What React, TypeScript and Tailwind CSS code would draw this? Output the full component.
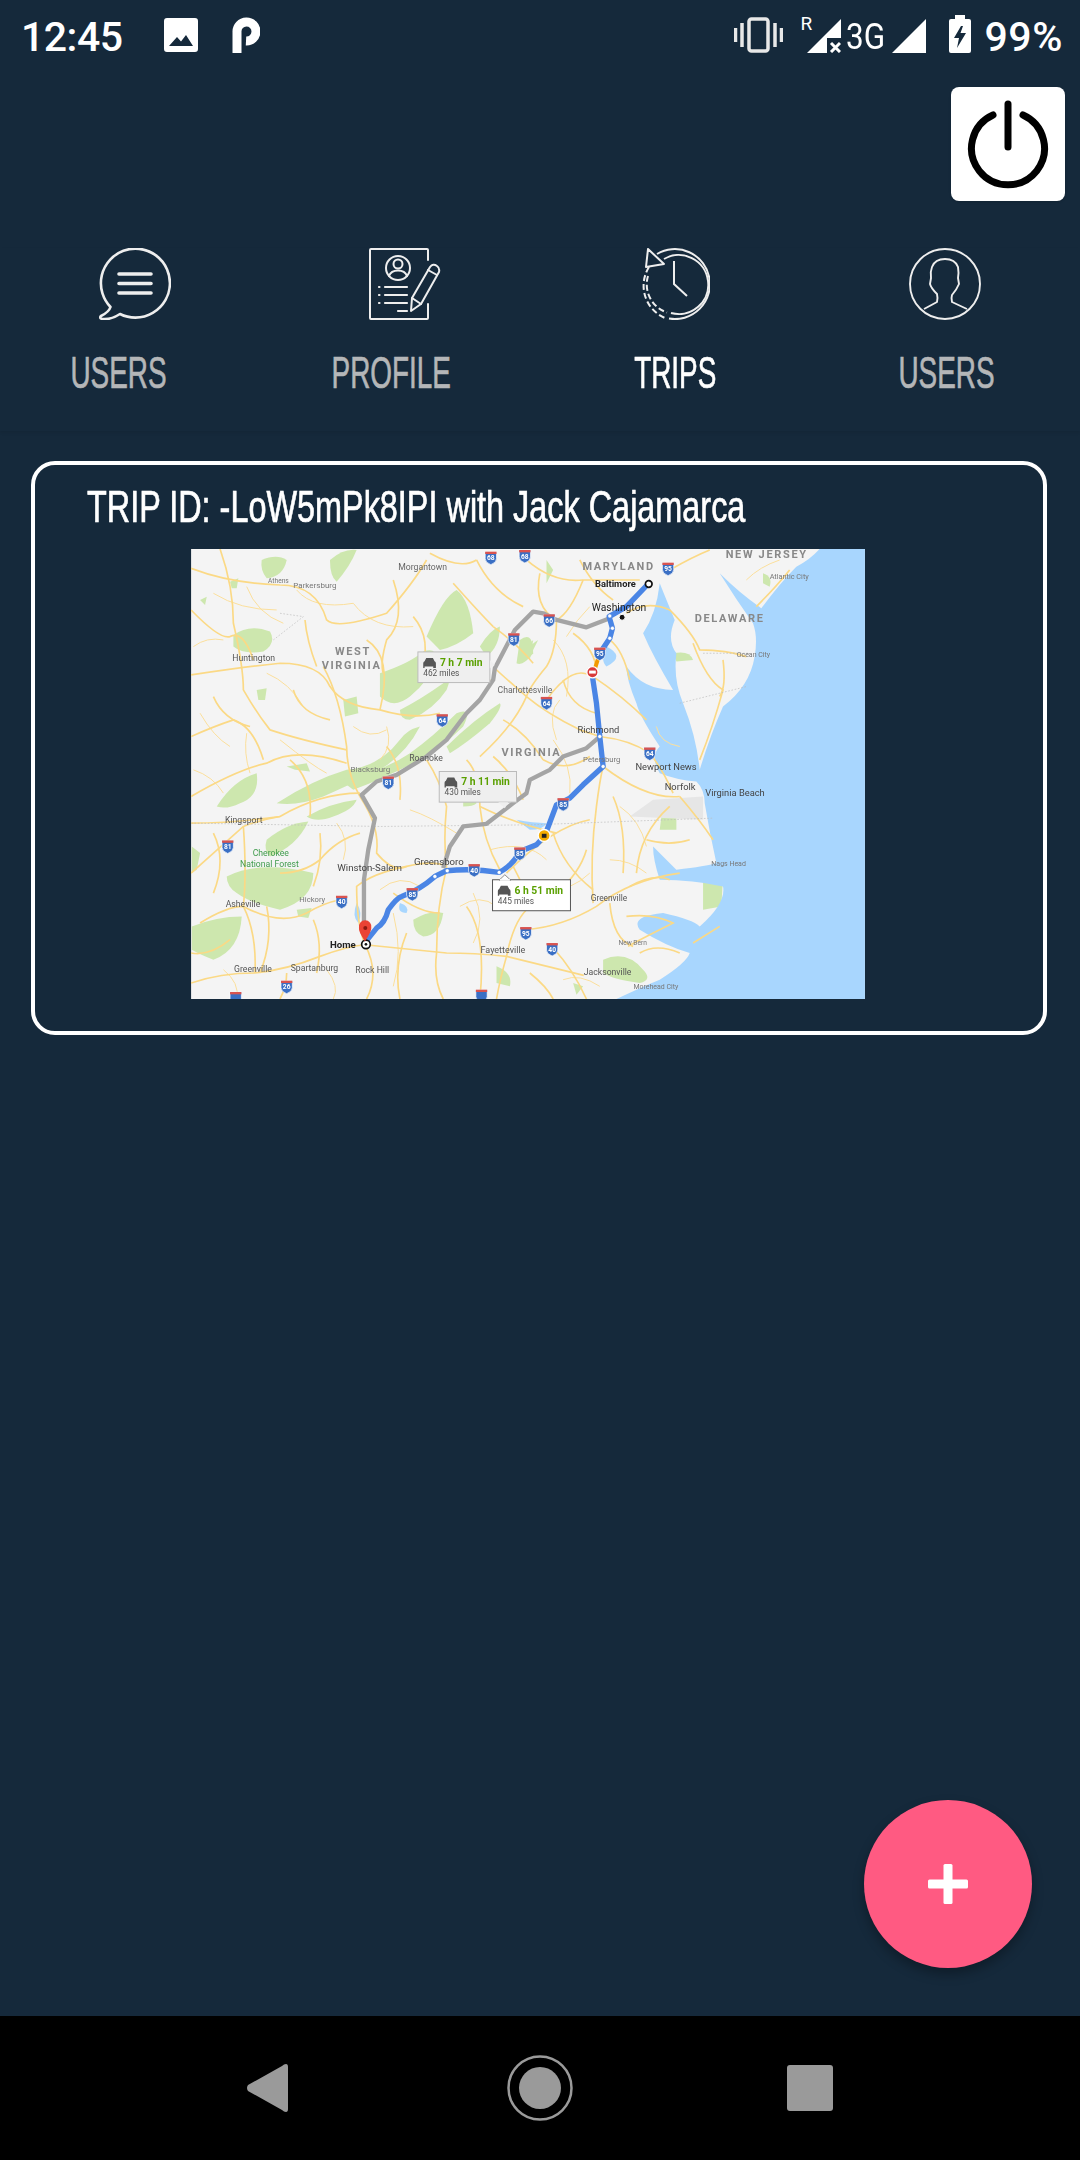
import React from "react";

const FONT_NAME = "font-['Liberation_Sans',sans-serif] [-webkit-text-stroke:0.7px_currentColor]";

const greens = [
  "M160 285Q210 250 270 275Q290 310 250 335Q190 345 160 320Z",
  "M450 60Q490 25 530 30Q510 80 470 125Q450 110 450 60Z",
  "M245 60Q290 40 320 60Q310 110 260 115Q240 90 245 60Z",
  "M150 125L175 115L170 145L155 145Z",
  "M60 180L80 170L75 195Z",
  "M230 450L260 445L255 480L235 480Z",
  "M600 400Q690 370 730 335Q770 320 770 360Q750 420 690 470Q640 510 600 470Z",
  "M660 510Q720 480 790 430Q820 400 800 450Q760 510 690 540Q660 540 660 510Z",
  "M740 290Q790 170 830 150Q870 180 880 280Q830 320 780 330Z",
  "M900 320Q930 270 960 260Q960 320 920 350Z",
  "M290 790Q400 720 500 690Q600 680 660 600Q680 570 720 560Q680 640 600 690Q500 740 430 770Q350 800 290 790Z",
  "M480 720Q600 700 690 640Q760 590 830 520Q880 500 850 560Q780 630 700 670Q600 720 520 750Z",
  "M800 620Q880 540 960 490Q970 500 930 550Q860 610 810 640Z",
  "M380 830Q450 790 530 780Q520 810 460 830Q410 850 380 830Z",
  "M110 800Q160 720 230 700Q240 770 180 790Q140 810 110 800Z",
  "M320 680L380 670L390 695L345 690Z",
  "M260 900Q320 850 385 845Q350 920 270 950Q250 930 260 900Z",
  "M140 1010Q240 960 400 1000Q400 1080 300 1110Q210 1090 170 1060Q140 1040 140 1010Z",
  "M35 1160Q110 1130 185 1130Q180 1230 100 1260Q50 1240 35 1230Z",
  "M35 920L60 940L50 990L35 1000Z",
  "M850 770Q880 760 890 790Q880 800 850 800Z",
  "M700 1140Q750 1110 790 1120Q780 1190 730 1190Q700 1180 700 1140Z",
  "M350 1110L395 1105L385 1135L355 1130Z",
  "M1020 300Q1060 270 1060 340Q1030 380 1010 370Z",
  "M1035 330Q1060 310 1075 300L1050 350Z",
  "M490 480L530 470L535 520L495 530Z",
  "M1450 790L1490 790L1490 870L1440 870Z",
  "M1570 1010L1630 1010L1625 1100L1570 1110Z",
  "M1270 1260Q1340 1230 1390 1290Q1420 1320 1380 1330Q1300 1320 1270 1300Z",
  "M1480 340Q1530 330 1540 360L1490 365Z",
  "M1750 100Q1780 110 1770 140L1750 130Z",
  "M950 1280Q1000 1300 990 1340L950 1330Z",
  "M1100 60L1120 90L1100 130Z",
  "M1040 320L1060 300L1050 360Z",
  "M1180 1330L1210 1340L1190 1365Z",
];

const roads = [
  "M33 85Q150 130 300 135Q410 135 440 240Q470 270 620 220Q700 130 740 60",
  "M33 405Q200 380 300 370Q420 370 450 440Q490 500 600 510Q700 540 780 520",
  "M375 240Q380 300 410 380",
  "M120 27Q160 140 160 250Q190 380 190 450Q230 520 270 570Q360 600 500 630",
  "M430 380Q480 470 500 620Q500 700 540 770",
  "M33 770Q170 690 260 670Q350 620 500 670",
  "M33 850Q160 850 300 830Q420 760 540 760",
  "M540 770Q600 860 590 940Q640 1000 680 980Q760 960 800 980",
  "M33 1000Q100 940 190 860Q240 840 300 830",
  "M190 860Q200 1000 190 1100Q230 1180 225 1300",
  "M60 1150Q140 1100 190 1100Q300 1160 380 1120Q430 1090 480 1080",
  "M225 1300Q320 1290 420 1250Q500 1220 555 1215",
  "M555 1215Q530 1150 530 1040Q580 1000 680 980",
  "M555 1215Q600 1300 560 1378",
  "M320 1300Q320 1340 300 1378",
  "M555 1215Q700 1230 800 1240Q880 1240 980 1250",
  "M800 985Q770 1100 770 1240Q760 1320 790 1378",
  "M980 1250Q960 1320 950 1378",
  "M980 1250Q1000 1150 1040 1110Q1040 1050 1000 980",
  "M980 1250Q1100 1280 1212 1307",
  "M1040 1170Q1150 1160 1250 1100Q1350 1020 1500 1000",
  "M1290 1090Q1300 1200 1360 1220",
  "M1240 1090Q1230 950 1250 800Q1260 720 1270 680",
  "M1120 1225Q1180 1290 1220 1378",
  "M1270 680Q1400 780 1500 770",
  "M1260 590Q1350 600 1410 640Q1450 690 1480 760",
  "M1500 770Q1560 840 1600 900",
  "M1470 800Q1380 880 1370 1000",
  "M1230 840Q1120 860 980 1000",
  "M900 800Q1000 850 1130 880",
  "M740 660Q780 720 800 800Q790 900 800 985",
  "M860 660Q900 700 900 800Q910 900 960 990",
  "M1040 470Q1100 520 1200 570Q1230 580 1260 590",
  "M1040 470Q1000 560 900 650",
  "M1040 470Q960 400 945 385",
  "M1100 480Q1180 370 1235 410",
  "M1130 240Q1130 330 1100 380Q1050 440 1040 470",
  "M1240 410Q1330 470 1400 540",
  "M1290 300Q1330 330 1350 420",
  "M1340 220Q1400 180 1470 210Q1540 280 1560 330Q1640 330 1700 350",
  "M1470 90Q1540 50 1590 30",
  "M1540 310Q1580 420 1630 450Q1600 560 1560 660",
  "M1630 360Q1640 440 1620 470",
  "M1730 200Q1790 140 1830 90",
  "M1200 60Q1240 140 1300 180",
  "M1040 60Q1120 130 1210 120Q1300 120 1380 120",
  "M640 120Q680 240 620 300Q600 370 610 400",
  "M890 60Q940 160 1030 200",
  "M750 40Q840 90 890 60",
  "M1340 1130Q1420 1120 1480 1150Q1380 1200 1345 1220",
  "M1350 1040Q1420 1000 1470 1020",
  "M300 1000Q370 1000 420 960Q470 900 540 880",
  "M33 210Q120 300 150 290Q190 270 220 360",
  "M33 590Q100 560 160 540Q220 560 250 660",
  "M100 470Q130 540 210 560",
  "M340 450Q360 520 450 540",
  "M560 300Q640 350 600 510",
  "M700 230Q760 300 720 400",
  "M820 130Q900 220 940 260",
  "M940 260Q1010 310 1060 370",
  "M1080 100Q1060 200 1130 240",
  "M1210 120Q1170 220 1130 240",
  "M1180 280Q1250 330 1250 400",
  "M1150 420Q1170 500 1250 520",
  "M970 540Q1040 580 1090 660",
  "M1090 660Q1160 700 1230 650",
  "M940 650Q1000 700 1030 780",
  "M620 620Q670 680 660 780",
  "M330 660Q400 720 390 830",
  "M420 880Q430 960 400 1040",
  "M100 880Q140 960 100 1060",
  "M260 1100Q280 1200 240 1300",
  "M400 1140Q430 1210 410 1300",
  "M640 1060Q720 1120 780 1120",
  "M680 1180Q640 1280 660 1378",
  "M860 1100Q920 1180 900 1378",
  "M1050 1300Q1100 1340 1120 1378",
  "M1130 1060Q1200 1000 1220 930",
  "M1300 770Q1340 860 1330 1000",
  "M1400 900Q1470 920 1530 900",
  "M1380 1240Q1430 1210 1500 1240",
  "M1120 880Q1150 980 1240 1050",
  "M33 1330Q120 1300 225 1300",
  "M33 1240Q90 1250 150 1200",
  "M1620 1160L1540 1210",
];

const thinRoads = [
  "M100 160Q180 210 290 210",
  "M300 600Q400 680 440 700",
  "M60 520Q100 590 150 620",
  "M620 560Q640 620 600 660",
  "M820 380Q860 430 940 420",
  "M1120 600Q1180 680 1170 760",
  "M930 930Q1040 900 1100 960",
  "M640 1120Q670 1240 640 1340",
  "M880 1060Q920 1140 880 1210",
  "M1090 1060Q1180 1050 1230 1000",
  "M1320 800Q1380 840 1400 920",
  "M1120 300Q1180 360 1160 470",
  "M200 140Q230 220 310 250",
  "M350 150Q400 210 520 190",
  "M520 190Q580 270 700 260",
  "M40 320Q80 290 130 300",
  "M260 400Q330 430 370 500",
  "M520 560Q570 600 620 570",
  "M40 690Q100 710 130 760",
  "M200 580Q190 640 210 700",
  "M470 850Q510 900 490 960",
  "M690 810Q750 830 830 880",
  "M600 1050Q660 1000 720 1040",
  "M840 1100Q900 1060 950 1100",
  "M440 1290Q480 1340 460 1378",
  "M130 1290Q180 1330 170 1378",
  "M1130 600Q1100 520 1140 480",
  "M1230 200Q1190 240 1160 290",
  "M1430 560Q1440 610 1500 620",
  "M1400 1000Q1350 960 1290 960",
  "M1150 1320Q1200 1300 1260 1340",
  "M1700 120Q1740 80 1800 60",
];

const water = "M1036 27L1036 1378L290 1378Q370 1340 420 1320Q500 1270 510 1240Q440 1220 360 1170Q330 1130 430 1120Q520 1140 540 1160Q620 1090 610 1040Q520 1020 420 1020Q400 960 400 920Q440 960 470 990Q560 980 590 970Q570 880 555 790Q555 750 530 725Q470 720 420 700Q390 650 420 620Q360 530 350 490Q320 420 320 380Q370 450 460 450Q400 350 370 280Q410 220 420 130Q440 180 465 240Q440 300 470 340Q460 420 490 490Q530 590 540 690Q570 590 610 500Q690 440 705 350Q715 290 700 250Q650 180 600 100Q660 160 725 205Q780 130 830 80Q870 60 900 27Z";

const lakes = [
  "M1010 840Q1060 850 1100 850Q1090 870 1050 870Z",
  "M530 1090Q550 1120 535 1150Q515 1130 530 1090Z",
  "M660 1090Q690 1100 680 1120Q650 1120 660 1090Z",
  "M1280 320Q1340 350 1280 380Q1260 360 1280 320Z",
];

const labels: [number, number, string, number, string, number?, boolean?][] = [
  [264, 128, "Athens", 20, "#777"],
  [340, 145, "Parkersburg", 24, "#777"],
  [655, 90, "Morgantown", 26, "#666"],
  [157, 362, "Huntington", 26, "#555"],
  [465, 345, "WEST", 33, "#888", 5, true],
  [425, 388, "VIRGINIA", 33, "#888", 5, true],
  [953, 460, "Charlottesville", 26, "#666"],
  [965, 647, "VIRGINIA", 33, "#888", 5, true],
  [688, 663, "Roanoke", 26, "#555"],
  [512, 697, "Blacksburg", 24, "#777"],
  [135, 850, "Kingsport", 26, "#555"],
  [218, 950, "Cherokee", 26, "#3f9b4c"],
  [180, 983, "National Forest", 26, "#3f9b4c"],
  [472, 994, "Winston-Salem", 29, "#444"],
  [702, 976, "Greensboro", 29, "#444"],
  [137, 1102, "Asheville", 26, "#555"],
  [358, 1088, "Hickory", 23, "#777"],
  [450, 1224, "Home", 29, "#222", 0, true],
  [162, 1296, "Greenville", 26, "#555"],
  [332, 1293, "Spartanburg", 26, "#555"],
  [526, 1300, "Rock Hill", 26, "#555"],
  [902, 1240, "Fayetteville", 27, "#555"],
  [1208, 90, "MARYLAND", 33, "#888", 5, true],
  [1638, 55, "NEW JERSEY", 33, "#888", 5, true],
  [1770, 117, "Atlantic City", 22, "#777"],
  [1246, 140, "Baltimore", 28, "#222", 0, true],
  [1236, 213, "Washington", 31, "#222"],
  [1545, 245, "DELAWARE", 33, "#888", 5, true],
  [1671, 352, "Ocean City", 21, "#777"],
  [1193, 580, "Richmond", 28, "#444"],
  [1210, 665, "Petersburg", 23, "#777"],
  [1367, 690, "Newport News", 28, "#444"],
  [1455, 750, "Norfolk", 28, "#444"],
  [1577, 768, "Virginia Beach", 28, "#444"],
  [1595, 978, "Nags Head", 21, "#777"],
  [1233, 1083, "Greenville", 25, "#555"],
  [1316, 1215, "New Bern", 20, "#777"],
  [1212, 1307, "Jacksonville", 26, "#555"],
  [1361, 1347, "Morehead City", 21, "#777"],
];

const shields: [number, number, string][] = [
  [933, 50, "68"], [1035, 45, "68"], [1002, 295, "81"], [787, 538, "64"],
  [625, 725, "81"], [143, 917, "81"], [883, 988, "40"], [1020, 938, "85"],
  [697, 1060, "85"], [485, 1083, "40"], [320, 1338, "26"], [167, 1372, ""],
  [1038, 1177, "95"], [1465, 83, "95"], [1108, 238, "66"], [1260, 338, "95"],
  [1100, 486, "64"], [1410, 638, "64"], [1150, 790, "85"], [1117, 1225, "40"],
  [905, 1365, ""],
];

const blueRoute =
  "M558 1205L590 1165Q615 1150 625 1110Q650 1075 665 1070Q720 1050 765 1010L800 993Q880 985 958 998Q1000 975 1020 935L1070 915L1095 888L1130 795L1170 775L1210 735L1270 680L1260 590L1250 490L1238 410";
const blueRouteTop = "M1260 340L1290 295L1298 265L1288 230L1340 200L1405 132";
const grayRouteA =
  "M552 1180L552 1020L565 930L585 835L545 765L590 725L650 705L740 650L800 600L860 520L900 480L940 420L945 385L1005 270L1060 215L1090 220L1130 240L1220 262L1290 235";
const grayRouteB =
  "M790 985L810 920L850 860L920 852L1000 790L1040 760L1050 720L1090 700L1110 690L1150 650L1220 625L1260 590";

const Callout = ({ x, y, w, h, time, miles, active }: { x: number; y: number; w: number; h: number; time: string; miles: string; active?: boolean }) => (
  <g>
    <rect x={x} y={y} width={w} height={h} fill={active ? "#fff" : "#efefef"} stroke={active ? "#555" : "#bbb"} strokeWidth="3" />
    <path d={`M${x + 16} ${y + 48}v-14q0 -4 4 -6l5 -10h20l5 10q4 2 4 6v14h-8v-4h-26v4z`} fill="#555" />
    <text x={x + 66} y={y + 42} fontSize="31" fontWeight="700" fill="#5aa000" fontFamily="Roboto, sans-serif">{time}</text>
    <text x={x + 16} y={y + 72} fontSize="25" fill="#555" fontFamily="Roboto, sans-serif">{miles}</text>
  </g>
);

const RouteMap = () => (
  <svg viewBox="33 27 2023 1351" className="block w-[674px] h-[450px] blur-[0.6px]">
    <rect x="33" y="27" width="2023" height="1351" fill="#f4f4f4" />
    {greens.map((d) => <path key={d} d={d} fill="#cde7ae" />)}
    <path d="M1420 780L1570 770L1570 840L1350 830Z" fill="#e6e6e6" />
    <g transform="translate(1020 0)"><path d={water} fill="#a8d6fe" /></g>
    {lakes.map((d) => <path key={d} d={d} fill="#a8d6fe" />)}
    {thinRoads.map((d) => <path key={d} d={d} fill="none" stroke="#fbdf9c" strokeWidth="3" />)}
    {roads.map((d) => <path key={d} d={d} fill="none" stroke="#fbd985" strokeWidth="5" />)}
    <path d="M33 850L600 860L1060 855L1600 835" fill="none" stroke="#bbb" strokeWidth="2" strokeDasharray="5 5" />
    <path d="M1500 490L1700 440M1570 340L1710 340M300 220L370 230L280 300" fill="none" stroke="#bbb" strokeWidth="2" strokeDasharray="5 5" />
    <path d={grayRouteA} fill="none" stroke="#a4a4a4" strokeWidth="13" strokeLinejoin="round" />
    <path d={grayRouteB} fill="none" stroke="#a4a4a4" strokeWidth="13" strokeLinejoin="round" />
    <path d={blueRoute} fill="none" stroke="#4a85e5" strokeWidth="16" strokeLinejoin="round" />
    <path d="M1238 410L1260 340" fill="none" stroke="#f29900" strokeWidth="12" />
    <path d={blueRouteTop} fill="none" stroke="#4a85e5" strokeWidth="16" strokeLinejoin="round" />
    {[[765, 1010], [802, 993], [958, 998], [1270, 680], [1260, 590], [1290, 295], [1298, 265], [1290, 228]].map(([cx, cy]) => (
      <circle key={cx + "-" + cy} cx={cx} cy={cy} r="6" fill="#fff" stroke="#3f78d8" strokeWidth="1.5" />
    ))}
    {shields.map(([x, y, n]) => (
      <g key={x + "-" + y}>
        <path d={`M${x - 17} ${y - 14}h34v20q0 12 -17 18q-17 -6 -17 -18z`} fill="#3a6fc4" stroke="#fff" strokeWidth="2" />
        <rect x={x - 17} y={y - 15} width="34" height="7" fill="#d9534f" />
        {n && <text x={x} y={y + 11} fontSize="20" fontWeight="700" textAnchor="middle" fill="#fff" fontFamily="Roboto, sans-serif">{n}</text>}
      </g>
    ))}
    {labels.map(([x, y, t, size, fill, ls, bold]) => (
      <text key={t + x} x={x} y={y} fontSize={size} fill={fill} letterSpacing={ls ?? 0} fontWeight={bold ? 700 : 400} fontFamily="Roboto, sans-serif">{t}</text>
    ))}
    <Callout x={714} y={336} w={216} h={92} time="7 h 7 min" miles="462 miles" />
    <path d="M930 360L945 375L930 385Z" fill="#efefef" />
    <Callout x={778} y={695} w={232} h={92} time="7 h 11 min" miles="430 miles" />
    <path d="M955 787L975 805L985 787Z" fill="#efefef" />
    <Callout x={938} y={1020} w={234} h={93} time="6 h 51 min" miles="445 miles" active />
    <path d="M958 1021L975 1005L992 1021Z" fill="#fff" stroke="#555" strokeWidth="2" />
    <rect x="960" y="1018" width="30" height="5" fill="#fff" />
    <circle cx="1238" cy="397" r="17" fill="#d93a3a" stroke="#fff" strokeWidth="4" />
    <rect x="1228" y="392" width="20" height="9" fill="#fff" />
    <circle cx="1093" cy="887" r="18" fill="#f5ac00" stroke="#fff" strokeWidth="4" />
    <rect x="1086" y="882" width="14" height="12" fill="#222" />
    <circle cx="1327" cy="232" r="9" fill="#111" stroke="#fff" strokeWidth="3" />
    <circle cx="1407" cy="132" r="10" fill="#fff" stroke="#111" strokeWidth="5" />
    <circle cx="558" cy="1214" r="13" fill="#fff" stroke="#111" strokeWidth="5" />
    <circle cx="558" cy="1214" r="4" fill="#111" />
    <path d="M555 1205Q535 1175 537 1165A19 19 0 1 1 574 1165Q575 1175 555 1205Z" fill="#ea4335" />
    <circle cx="556" cy="1165" r="6" fill="#8c1a12" />
  </svg>
);

const ChatIcon = () => (
  <svg viewBox="0 0 72 72" className="w-[72px] h-[72px] text-[#eeeeee]" fill="none" stroke="currentColor">
    <path d="M11.5 59A34.5 34.5 0 1 1 21 66Q12 72 3 71Q0 70 2 68Q10 64 11.5 59Z" strokeWidth="2.6" strokeLinejoin="round" />
    <path d="M20 26H52M20 35.500H52M20 45H52" strokeWidth="3.600" strokeLinecap="round" />
  </svg>
);

const ProfileIcon = () => (
  <svg viewBox="0 0 72 72" className="w-[72px] h-[72px] text-[#eeeeee]" fill="none" stroke="currentColor" strokeWidth="2" strokeLinecap="round" strokeLinejoin="round">
    <path d="M59 12V2Q59 1 58 1H2Q1 1 1 2V70Q1 71 2 71H58Q59 71 59 70V56" />
    <circle cx="29" cy="20" r="12" />
    <circle cx="29" cy="16" r="4.500" />
    <path d="M20 28Q22 22.500 29 22.500Q36 22.500 38 28" />
    <path d="M10 39H10.500M10 47H10.500M10 55H10.500M16 39H38M16 47H38M16 55H38M29 63H38" strokeWidth="2.200" />
    <path d="M42 63L43 50L61 19Q64 15 68 18Q71 20 70 24L52 56Z" />
    <path d="M43 50L52 56M59 22L68 27" />
  </svg>
);

const TripsIcon = () => (
  <svg viewBox="0 0 72 72" className="w-[72px] h-[72px] -translate-x-[1px] text-[#eeeeee]" fill="none" stroke="currentColor" strokeWidth="2">
    <path d="M19 6A35 35 0 1 1 31 70.600" />
    <path d="M26 11A29.500 29.500 0 1 1 33 65" />
    <path d="M11 19A35 35 0 0 0 27 70" strokeDasharray="6 3" />
    <path d="M10 28A29.500 29.500 0 0 0 29 64.500" strokeDasharray="6 3" />
    <path d="M10 1L8 19L26 16Z" strokeLinejoin="round" />
    <path d="M36 13V36L49 48" />
  </svg>
);

const UserIcon = () => (
  <svg viewBox="0 0 72 72" className="w-[72px] h-[72px] text-[#eeeeee]" fill="none" stroke="currentColor" strokeWidth="1.900" strokeLinejoin="round">
    <circle cx="36" cy="36" r="35" />
    <path d="M15 61L28 54Q29 50 28 46Q22 40 21 36L22 30Q21 24 23 19Q26 11 36 11Q46 11 49 19Q50 25 49 30L50 36Q48 41 43 47Q42 50 43 54L58 61" />
  </svg>
);

const tabs = [
  { label: "USERS", icon: <ChatIcon />, shift: "-translate-x-[16px]", color: "text-[#b4b6b8]" },
  { label: "PROFILE", icon: <ProfileIcon />, shift: "-translate-x-[14px]", color: "text-[#b4b6b8]" },
  { label: "TRIPS", icon: <TripsIcon />, shift: "", color: "text-white" },
  { label: "USERS", icon: <UserIcon />, shift: "translate-x-[2px]", color: "text-[#b4b6b8]" },
];

const StatusBar = () => (
  <div className="flex h-[72px] items-start text-white font-['Roboto',sans-serif]">
    <span className="ml-[21px] mt-[13px] text-[41px] leading-[48px] font-medium tracking-[-0.5px]">12:45</span>
    <svg viewBox="0 0 34 34" className="ml-[41px] mt-[18px] w-[34px] h-[34px]">
      <path fillRule="evenodd" fill="#fff" d="M3 0H31Q34 0 34 3V31Q34 34 31 34H3Q0 34 0 31V3Q0 0 3 0ZM5 28H29L22 17L17 23.500L13 19Z" />
    </svg>
    <svg viewBox="0 0 28 36" className="ml-[34px] mt-[17px] w-[28px] h-[36px]" fill="none" stroke="#fff" strokeWidth="9">
      <path d="M5 36V15A9.500 9.500 0 1 1 14 24" />
    </svg>
    <svg viewBox="0 0 49 36" className="ml-[474px] mt-[17px] w-[49px] h-[36px]" fill="none" stroke="#e8e8e8">
      <rect x="15" y="2" width="19" height="32" rx="2.500" strokeWidth="3.500" />
      <path d="M1.500 11V25M8 6V30M41 6V30M47.500 11V25" strokeWidth="3.500" />
    </svg>
    <div className="relative ml-[24px] mt-[19px] w-[34px] h-[34px]">
      <span className="absolute -left-[6px] -top-[6px] text-[19px] leading-[22px]">R</span>
      <svg viewBox="0 0 34 34" className="w-[34px] h-[34px]">
        <path fill="#fff" d="M34 0V19H20V34H0Z" />
        <path stroke="#fff" strokeWidth="3" d="M24 24L33 33M33 24L24 33" />
      </svg>
    </div>
    <span className="ml-[5px] mt-[15px] inline-block w-[36px] origin-left scale-x-[0.85] whitespace-nowrap text-[37px] leading-[44px]">3G</span>
    <svg viewBox="0 0 34 34" className="ml-[10px] mt-[19px] w-[34px] h-[34px]">
      <path fill="#fff" d="M34 0V34H0Z" />
    </svg>
    <svg viewBox="0 0 22 38" className="ml-[23px] mt-[15px] w-[22px] h-[38px]">
      <path fillRule="evenodd" fill="#fff" d="M6 0H16V4H20Q22 4 22 6V36Q22 38 20 38H2Q0 38 0 36V6Q0 4 2 4H6ZM12 11L5 23H10L8 33L17 18H11.500L14 11Z" />
    </svg>
    <span className="ml-[14px] mt-[13px] text-[41px] leading-[48px] font-medium tracking-[0.5px]">99%</span>
  </div>
);

const App = () => {
  return (
    <div className="flex h-[2160px] w-[1080px] flex-col bg-[#15293b]">
      <StatusBar />
      <div className="flex justify-end pt-[15px] pr-[15px]">
        <button className="flex h-[114px] w-[114px] items-center justify-center rounded-[8px] bg-white shadow">
          <svg viewBox="0 0 114 114" className="h-[114px] w-[114px]" fill="none" stroke="#000" strokeLinecap="round" strokeWidth="7">
            <path d="M57 17V60" />
            <path d="M42 28A36.500 36.500 0 1 0 72 28" />
          </svg>
        </button>
      </div>
      <div className="mt-[47px] grid h-[183px] grid-cols-4 shadow-[0_2px_3px_rgba(0,0,0,0.08)]">
        {tabs.map((t, i) => (
          <div key={i} className="flex flex-col items-center">
            {t.icon}
            <span className={`mt-[27px] inline-block scale-x-[0.62] whitespace-nowrap text-[45px] leading-[52px] ${FONT_NAME} ${t.color} ${t.shift}`}>
              {t.label}
            </span>
          </div>
        ))}
      </div>
      <div className="relative flex-1 pt-[30px]">
        <div className="ml-[31px] mr-[33px] h-[574px] rounded-[24px] border-[4px] border-white pt-[13px]">
          <div className={`ml-[52px] h-[71px] w-[920px] origin-left scale-x-[0.72] whitespace-nowrap text-[45px] leading-[58px] text-white ${FONT_NAME}`}>
            TRIP ID: -LoW5mPk8IPI with Jack Cajamarca
          </div>
          <div className="ml-[156px]">
            <RouteMap />
          </div>
        </div>
        <button className="absolute right-[48px] top-[1369px] flex h-[168px] w-[168px] items-center justify-center rounded-full bg-[#ff5a82] shadow-[0_6px_12px_rgba(0,0,0,0.3)]">
          <svg viewBox="0 0 40 40" className="h-[40px] w-[40px]" fill="#fff">
            <rect x="15.500" y="0" width="9" height="40" rx="1.500" />
            <rect x="0" y="15.500" width="40" height="9" rx="1.500" />
          </svg>
        </button>
      </div>
      <div className="relative flex h-[144px] items-center bg-black pl-[246px]">
        <svg viewBox="0 0 42 48" className="h-[48px] w-[42px]" fill="#9a9a9a">
          <path d="M40 0Q42 0 42 3V45Q42 48 40 48Q38 48 36 46L2 27Q0 24 2 21L36 2Q38 0 40 0Z" />
        </svg>
        <svg viewBox="0 0 66 66" className="ml-[219px] h-[66px] w-[66px]">
          <circle cx="33" cy="33" r="31.500" fill="none" stroke="#9a9a9a" strokeWidth="2.500" />
          <circle cx="33" cy="33" r="21" fill="#9a9a9a" />
        </svg>
        <div className="ml-[214px] h-[46px] w-[46px] rounded-[3px] bg-[#9a9a9a]" />
      </div>
    </div>
  );
};

export default App;
